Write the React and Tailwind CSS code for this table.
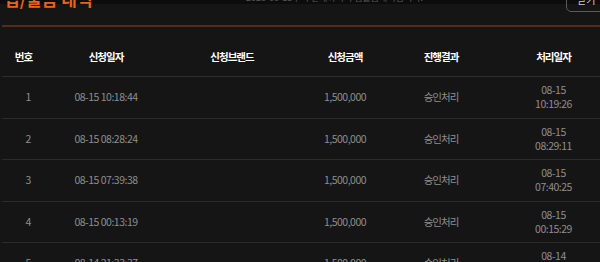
import React from 'react';

const rows = [
  { no: 1, req: '08-15 10:18:44', amount: '1,500,000', status: '승인처리', d: '08-15', t: '10:19:26' },
  { no: 2, req: '08-15 08:28:24', amount: '1,500,000', status: '승인처리', d: '08-15', t: '08:29:11' },
  { no: 3, req: '08-15 07:39:38', amount: '1,500,000', status: '승인처리', d: '08-15', t: '07:40:25' },
  { no: 4, req: '08-15 00:13:19', amount: '1,500,000', status: '승인처리', d: '08-15', t: '00:15:29' },
  { no: 5, req: '08-14 21:33:37', amount: '1,500,000', status: '승인처리', d: '08-14', t: '21:35:02' },
];

const cols = 'grid grid-cols-[43px_122px_130px_96px_96px_113px]';

export default function App() {
  return (
    <div
      className="w-[600px] h-[262px] overflow-hidden bg-[linear-gradient(to_bottom,#0c0c0c_4px,#151515_4px)]"
      style={{ fontFamily: '"Noto Sans CJK KR", "Noto Sans", sans-serif' }}
    >
      {/* header */}
      <div className="relative h-[25px]">
        <h1 className="absolute left-[4px] top-[-13px] text-[17px] font-bold text-[#e8631c] leading-[24px]">
          입/출금 내역
        </h1>
        <p className="absolute left-[246px] top-[-9px] text-[9px] text-[#575757] leading-[14px]">
          2023-08-15부터 현재까지의 입출금내역입니다.
        </p>
        <button className="absolute left-[566px] top-[-12px] w-[44px] h-[24px] border border-[#5a5a5a] rounded-[5px] text-[10px] text-[#cfcfcf] pl-[10px] text-left leading-[22px]">
          닫기
        </button>
      </div>
      <div className="ml-[2px] h-[2px] bg-[#5a2a12]" />

      {/* table */}
      <div className="ml-[2px]">
        <div className={`${cols} h-[50px] pt-[10px] items-center border-b border-[#2e2e2e] text-white font-bold text-[10.5px] tracking-[-1px]`}>
          <div className="text-center">번호</div>
          <div className="text-center">신청일자</div>
          <div className="text-center">신청브랜드</div>
          <div className="text-center">신청금액</div>
          <div className="text-center">진행결과</div>
          <div className="text-center pl-4">처리일자</div>
        </div>
        {rows.map((r) => (
          <div
            key={r.no}
            className={`${cols} h-[41.5px] items-center border-b border-[#2b2b2b] text-[#8e8e8e] text-[10.5px]`}
          >
            <div className="text-center pl-[10px]">{r.no}</div>
            <div className="text-center tracking-[-0.5px]">{r.req}</div>
            <div className="text-center"></div>
            <div className="text-center tracking-[-0.5px]">{r.amount}</div>
            <div className="text-center tracking-[-1px]">{r.status}</div>
            <div className="text-center pl-4 leading-[14px] tracking-[-0.5px]">
              <div>{r.d}</div>
              <div>{r.t}</div>
            </div>
          </div>
        ))}
      </div>
    </div>
  );
}
